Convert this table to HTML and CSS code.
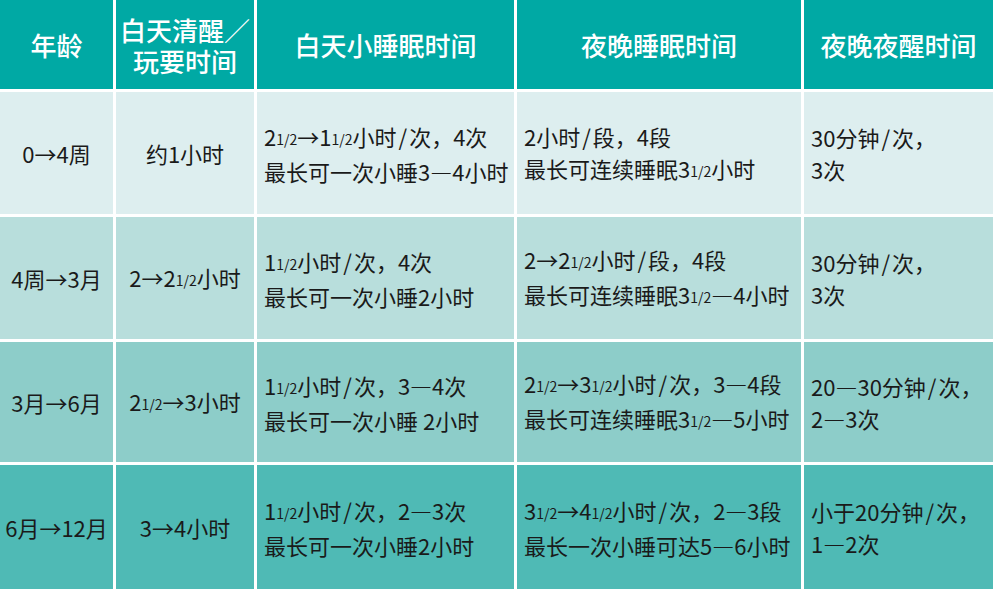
FILE: index.html
```html
<!DOCTYPE html>
<html lang="zh-CN">
<head>
<meta charset="utf-8">
<title>婴儿睡眠时间表</title>
<link rel="stylesheet" href="styles.css">
</head>
<body>
<div class="table">
  <div class="cell head"><div>年龄</div></div>
  <div class="cell head two"><div>白天清醒／<br>玩要时间</div></div>
  <div class="cell head"><div>白天小睡眠时间</div></div>
  <div class="cell head"><div>夜晚睡眠时间</div></div>
  <div class="cell head"><div>夜晚夜醒时间</div></div>

  <div class="cell r1 c"><div>0→4周</div></div>
  <div class="cell r1 c"><div>约1小时</div></div>
  <div class="cell r1 l"><div>2<span class="frac">1/2</span>→1<span class="frac">1/2</span>小时<span class="sl">/</span>次，4次<br>最长可一次小睡3—4小时</div></div>
  <div class="cell r1 l"><div>2小时<span class="sl">/</span>段，4段<br>最长可连续睡眠3<span class="frac">1/2</span>小时</div></div>
  <div class="cell r1 l"><div>30分钟<span class="sl">/</span>次，<br>3次</div></div>

  <div class="cell r2 c"><div>4周→3月</div></div>
  <div class="cell r2 c"><div>2→2<span class="frac">1/2</span>小时</div></div>
  <div class="cell r2 l"><div>1<span class="frac">1/2</span>小时<span class="sl">/</span>次，4次<br>最长可一次小睡2小时</div></div>
  <div class="cell r2 l"><div>2→2<span class="frac">1/2</span>小时<span class="sl">/</span>段，4段<br>最长可连续睡眠3<span class="frac">1/2</span>—4小时</div></div>
  <div class="cell r2 l"><div>30分钟<span class="sl">/</span>次，<br>3次</div></div>

  <div class="cell r3 c"><div>3月→6月</div></div>
  <div class="cell r3 c"><div>2<span class="frac">1/2</span>→3小时</div></div>
  <div class="cell r3 l"><div>1<span class="frac">1/2</span>小时<span class="sl">/</span>次，3—4次<br>最长可一次小睡 2小时</div></div>
  <div class="cell r3 l"><div>2<span class="frac">1/2</span>→3<span class="frac">1/2</span>小时<span class="sl">/</span>次，3—4段<br>最长可连续睡眠3<span class="frac">1/2</span>—5小时</div></div>
  <div class="cell r3 l"><div>20—30分钟<span class="sl">/</span>次，<br>2—3次</div></div>

  <div class="cell r4 c"><div>6月→12月</div></div>
  <div class="cell r4 c"><div>3→4小时</div></div>
  <div class="cell r4 l"><div>1<span class="frac">1/2</span>小时<span class="sl">/</span>次，2—3次<br>最长可一次小睡2小时</div></div>
  <div class="cell r4 l"><div>3<span class="frac">1/2</span>→4<span class="frac">1/2</span>小时<span class="sl">/</span>次，2—3段<br>最长一次小睡可达5—6小时</div></div>
  <div class="cell r4 l"><div>小于20分钟<span class="sl">/</span>次，<br>1—2次</div></div>
</div>
</body>
</html>
```
FILE: styles.css
```css
html, body {
  margin: 0;
  padding: 0;
  background: #ffffff;
}

body {
  width: 995px;
  height: 589px;
  overflow: hidden;
  font-family: "Noto Sans CJK SC", "Noto Sans", sans-serif;
}

.table {
  display: grid;
  width: 993px;
  grid-template-columns: 113px 138px 257px 284px 189px;
  grid-template-rows: 89px 122px 122px 120px 124px;
  gap: 3px;
}

.cell {
  display: flex;
  align-items: center;
  font-size: 22px;
  line-height: 32px;
  color: #1a1a1a;
  white-space: nowrap;
}

.head {
  background: #00a9a4;
  color: #ffffff;
  font-size: 26px;
  font-weight: 500;
  line-height: 31px;
  justify-content: center;
  text-align: center;
}

.c {
  justify-content: center;
  text-align: center;
}

.l {
  justify-content: flex-start;
  padding-left: 7px;
}

.r1 { background: #ddeeef; }
.r2 { background: #b8dedc; }
.r3 { background: #8dcdc9; }
.r4 { background: #4fbab5; }

.frac {
  font-size: 14px;
  vertical-align: 1px;
}

.sl {
  margin: 0 2px;
}
```
